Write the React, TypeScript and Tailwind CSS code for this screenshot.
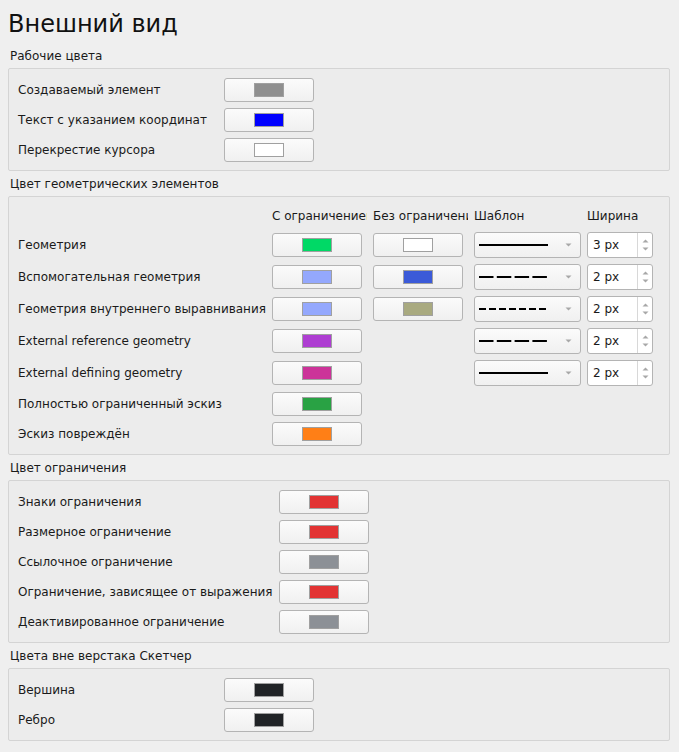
import React from 'react';

const FONT = { fontFamily: '"DejaVu Sans", "Noto Sans", sans-serif' };

const ColorButton: React.FC<{ color: string }> = ({ color }) => (
  <div className="w-[90px] h-[24px] rounded-[3px] border border-[#b4b4b4] bg-gradient-to-b from-[#fbfbfb] to-[#f0f0f0] flex items-center justify-center">
    <div className="w-[30px] h-[14px] border border-[#a0a0a0]" style={{ backgroundColor: color }} />
  </div>
);

const LineCombo: React.FC<{ dash?: string }> = ({ dash }) => (
  <div className="w-[107px] h-[26px] rounded-[3px] border border-[#b4b4b4] bg-gradient-to-b from-[#fbfbfb] to-[#f0f0f0] flex items-center pl-[4px]">
    <svg width="70" height="6" className="block">
      <line x1="0" y1="3" x2="69" y2="3" stroke="#000" strokeWidth="2" strokeDasharray={dash} />
    </svg>
    <svg width="7" height="4" className="ml-[16px] block">
      <path d="M0.5 0.5 L6.5 0.5 L3.5 3.5 Z" fill="#a8a8a8" />
    </svg>
  </div>
);

const SpinBox: React.FC<{ value: string }> = ({ value }) => (
  <div className="w-[66px] h-[26px] rounded-[3px] border border-[#b4b4b4] bg-white flex items-stretch">
    <div className="flex-1 flex items-center pl-[5px] text-[12px] text-[#1a1a1a]">{value}</div>
    <div className="w-[15px] border-l border-[#d8d8d8] flex flex-col items-center justify-center gap-[4px]">
      <svg width="7" height="4" className="block">
        <path d="M0.5 3.5 L6.5 3.5 L3.5 0.5 Z" fill="#a8a8a8" />
      </svg>
      <svg width="7" height="4" className="block">
        <path d="M0.5 0.5 L6.5 0.5 L3.5 3.5 Z" fill="#a8a8a8" />
      </svg>
    </div>
  </div>
);

const Section: React.FC<{ title: string; children: React.ReactNode }> = ({ title, children }) => (
  <div className="mt-[4px]">
    <div className="h-[18px] leading-[18px] pl-[2px] mb-[3px] text-[12px] text-[#1a1a1a]">{title}</div>
    <div className="border border-[#d4d4d4] rounded-[2px] bg-[#ececec] pl-[9px] pt-[9px] pb-[8px]">{children}</div>
  </div>
);

const SimpleRows: React.FC<{ rows: [string, string][]; labelWidth: string }> = ({ rows, labelWidth }) => (
  <div className="flex flex-col gap-[6px]">
    {rows.map(([label, color]) => (
      <div key={label} className="flex items-center h-[24px]">
        <div className={`${labelWidth} shrink-0 whitespace-nowrap text-[12px] text-[#1a1a1a]`}>{label}</div>
        <ColorButton color={color} />
      </div>
    ))}
  </div>
);

const GEOMETRY = [
  { label: 'Геометрия', c1: '#00d966', c2: '#ffffff', dash: undefined, width: '3 px' },
  { label: 'Вспомогательная геометрия', c1: '#94a8fd', c2: '#3b5ad8', dash: '14.5 3.3', width: '2 px' },
  { label: 'Геометрия внутреннего выравнивания', c1: '#94a8fd', c2: '#a9aa80', dash: '7 3', width: '2 px' },
  { label: 'External reference geometry', c1: '#ae3ed2', dash: '14.5 3.3', width: '2 px' },
  { label: 'External defining geometry', c1: '#cc3399', dash: undefined, width: '2 px' },
  { label: 'Полностью ограниченный эскиз', c1: '#29a244' },
  { label: 'Эскиз повреждён', c1: '#ff7f16' },
];

export default function App() {
  return (
    <div className="w-[679px] h-[752px] bg-[#efefef] px-[8px] overflow-hidden text-[#1a1a1a]" style={FONT}>
      <div className="w-[662px]">
        <div className="pt-[10px] h-[43px] text-[24px] leading-[28px] text-[#111]">Внешний вид</div>

        <Section title="Рабочие цвета">
          <SimpleRows
            labelWidth="w-[206px]"
            rows={[
              ['Создаваемый элемент', '#8f8f8f'],
              ['Текст с указанием координат', '#0000ff'],
              ['Перекрестие курсора', '#ffffff'],
            ]}
          />
        </Section>

        <Section title="Цвет геометрических элементов">
          <div className="grid grid-cols-[248px_95px_95px_107px_66px] gap-x-[6px] gap-y-[6px] items-center">
            <div className="h-[20px]" />
            <div className="h-[20px] leading-[20px] text-[12px] whitespace-nowrap overflow-hidden">С ограничением</div>
            <div className="h-[20px] leading-[20px] text-[12px] whitespace-nowrap overflow-hidden">Без ограничений</div>
            <div className="h-[20px] leading-[20px] text-[12px] whitespace-nowrap overflow-hidden">Шаблон</div>
            <div className="h-[20px] leading-[20px] text-[12px] whitespace-nowrap overflow-hidden">Ширина</div>
            {GEOMETRY.map((g) => (
              <React.Fragment key={g.label}>
                <div className="text-[12px] whitespace-nowrap">{g.label}</div>
                <div><ColorButton color={g.c1} /></div>
                <div>{g.c2 ? <ColorButton color={g.c2} /> : null}</div>
                <div>{g.width ? <LineCombo dash={g.dash} /> : null}</div>
                <div>{g.width ? <SpinBox value={g.width} /> : null}</div>
              </React.Fragment>
            ))}
          </div>
        </Section>

        <Section title="Цвет ограничения">
          <SimpleRows
            labelWidth="w-[261px]"
            rows={[
              ['Знаки ограничения', '#e23434'],
              ['Размерное ограничение', '#e23434'],
              ['Ссылочное ограничение', '#8c9096'],
              ['Ограничение, зависящее от выражения', '#e23434'],
              ['Деактивированное ограничение', '#8c9096'],
            ]}
          />
        </Section>

        <Section title="Цвета вне верстака Скетчер">
          <SimpleRows
            labelWidth="w-[206px]"
            rows={[
              ['Вершина', '#202326'],
              ['Ребро', '#202326'],
            ]}
          />
        </Section>
      </div>
    </div>
  );
}
